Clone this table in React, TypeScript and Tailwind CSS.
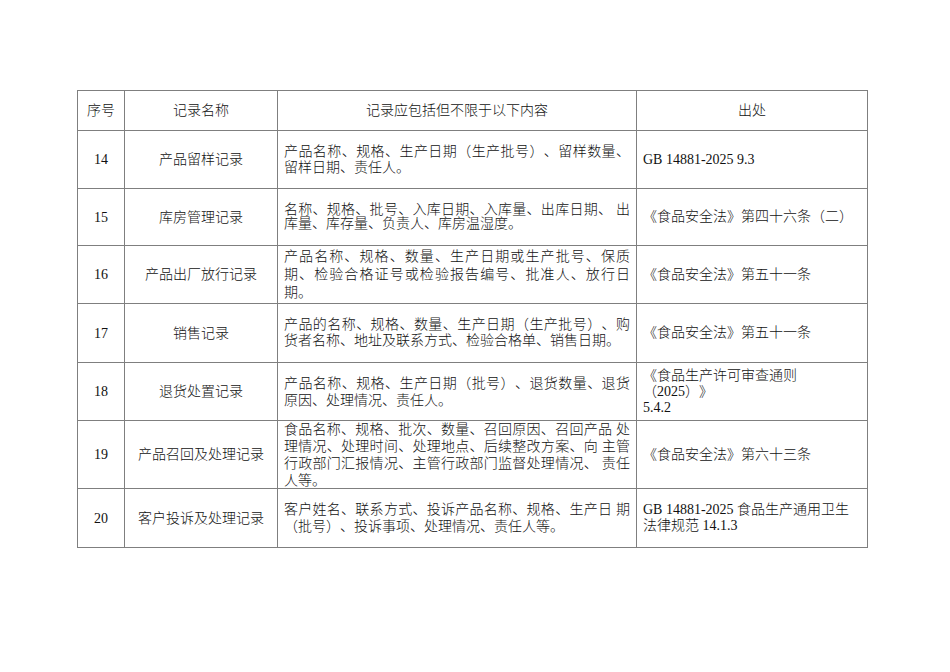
const rows = [
  {
    no: "14",
    name: "产品留样记录",
    content: ["产品名称、规格、生产日期（生产批号）、留样数量、", "留样日期、责任人。"],
    lh: "leading-[16px]",
    source: ["GB 14881-2025 9.3"],
  },
  {
    no: "15",
    name: "库房管理记录",
    content: ["名称、规格、批号、入库日期、入库量、出库日期、 出", "库量、库存量、负责人、库房温湿度。"],
    lh: "leading-[14px]",
    source: ["《食品安全法》第四十六条（二）"],
  },
  {
    no: "16",
    name: "产品出厂放行记录",
    content: [
      "产品名称、规格、数量、生产日期或生产批号、保质",
      "期、检验合格证号或检验报告编号、批准人、放行日",
      "期。",
    ],
    lh: "leading-[18px]",
    source: ["《食品安全法》第五十一条"],
  },
  {
    no: "17",
    name: "销售记录",
    content: ["产品的名称、规格、数量、生产日期（生产批号）、购", "货者名称、地址及联系方式、检验合格单、销售日期。"],
    lh: "leading-[16px]",
    source: ["《食品安全法》第五十一条"],
  },
  {
    no: "18",
    name: "退货处置记录",
    content: ["产品名称、规格、生产日期（批号）、退货数量、退货", "原因、处理情况、责任人。"],
    lh: "leading-[17px]",
    source: ["《食品生产许可审查通则", "（2025）》", "5.4.2"],
  },
  {
    no: "19",
    name: "产品召回及处理记录",
    content: [
      "食品名称、规格、批次、数量、召回原因、召回产品 处",
      "理情况、处理时间、处理地点、后续整改方案、向 主管",
      "行政部门汇报情况、主管行政部门监督处理情况、 责任",
      "人等。",
    ],
    lh: "leading-[17px]",
    source: ["《食品安全法》第六十三条"],
  },
  {
    no: "20",
    name: "客户投诉及处理记录",
    content: ["客户姓名、联系方式、投诉产品名称、规格、生产日 期", "（批号）、投诉事项、处理情况、责任人等。"],
    lh: "leading-[17px]",
    source: ["GB 14881-2025 食品生产通用卫生", "法律规范 14.1.3"],
  },
];

const cell = "border-r border-b border-[#7f7f7f] flex items-center";

const App = () => {
  return (
    <div className="w-[950px] h-[672px] bg-white pt-[90px] pl-[77px] text-[14px] text-[#111] font-light [text-spacing-trim:space-all] font-['Liberation_Serif','Noto_Sans_CJK_SC',serif]">
      <div className="grid grid-cols-[47px_153px_359px_231px] grid-rows-[40px_58px_57px_58px_59px_58px_68px_59px] w-[791px] border-l border-t border-[#7f7f7f]">
        {/* Header */}
        <div className={`${cell} justify-center`}>序号</div>
        <div className={`${cell} justify-center`}>记录名称</div>
        <div className={`${cell} justify-center`}>记录应包括但不限于以下内容</div>
        <div className={`${cell} justify-center`}>出处</div>

        {rows.map((row) => (
          <div key={row.no} className="contents">
            <div className={`${cell} justify-center`}>{row.no}</div>
            <div className={`${cell} justify-center`}>{row.name}</div>
            <div className={`${cell} pl-[6px] pr-[6px]`}>
              <div className={`w-full ${row.lh}`}>
                {row.content.map((line, i) => (
                  <div
                    key={i}
                    className={
                      i < row.content.length - 1
                        ? "whitespace-pre text-justify [text-align-last:justify]"
                        : "whitespace-pre"
                    }
                  >
                    {line}
                  </div>
                ))}
              </div>
            </div>
            <div className={`${cell} pl-[6px] pr-[4px]`}>
              <div className="leading-[16px]">
                {row.source.map((line, i) => (
                  <div key={i} className="whitespace-pre">
                    {line}
                  </div>
                ))}
              </div>
            </div>
          </div>
        ))}
      </div>
    </div>
  );
};

export default App;
